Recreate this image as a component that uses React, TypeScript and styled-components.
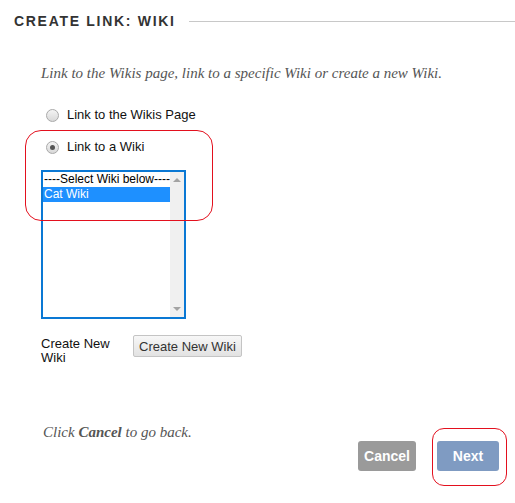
import React from "react";
import styled, { createGlobalStyle } from "styled-components";

const Global = createGlobalStyle`
  html, body { margin: 0; padding: 0; background: #fff; }
  body { font-family: "Liberation Sans", Arial, sans-serif; }
  * { box-sizing: border-box; }
`;

const Page = styled.div`
  position: relative;
  width: 515px;
  height: 503px;
  overflow: hidden;
`;

const Header = styled.div`
  display: flex;
  align-items: center;
  padding: 13px 0 0 14px;
`;

const Title = styled.h1`
  margin: 0;
  font-size: 14px;
  line-height: 16px;
  font-weight: bold;
  letter-spacing: 1.7px;
  color: #333;
  white-space: nowrap;
`;

const Rule = styled.div`
  flex: 1;
  height: 1px;
  background: #c8c8c8;
  margin-left: 13px;
`;

const Body = styled.div`
  padding-left: 41px;
`;

const Serif = styled.p`
  margin: 0;
  font-family: "Liberation Serif", "Times New Roman", serif;
  font-style: italic;
  font-size: 15px;
  line-height: 17px;
  color: #555;
`;

const Intro = styled(Serif)`
  margin-top: 36px;
`;

const RadioList = styled.div`
  display: flex;
  flex-direction: column;
  gap: 16px;
  margin-top: 25px;
  padding-left: 5px;
`;

const RadioRow = styled.label`
  display: flex;
  align-items: center;
  gap: 8px;
  font-size: 13px;
  line-height: 16px;
  color: #111;
`;

const RadioDot = styled.span<{ $checked?: boolean }>`
  position: relative;
  width: 13px;
  height: 13px;
  border-radius: 50%;
  border: 1px solid #a9a9a9;
  background: linear-gradient(#f4f4f4, #d8d8d8);
  &::after {
    content: "";
    display: ${(p) => (p.$checked ? "block" : "none")};
    position: absolute;
    left: 3px;
    top: 3px;
    width: 5px;
    height: 5px;
    border-radius: 50%;
    background: #555;
  }
`;

const ListBox = styled.div`
  display: flex;
  width: 145px;
  height: 149px;
  margin-top: 15px;
  border: 2px solid #0a78d4;
  background: #fff;
`;

const Options = styled.div`
  flex: 1;
  display: flex;
  flex-direction: column;
`;

const Option = styled.div<{ $selected?: boolean }>`
  height: 15px;
  line-height: 14px;
  font-size: 12px;
  padding-left: 1px;
  white-space: nowrap;
  overflow: hidden;
  color: ${(p) => (p.$selected ? "#fff" : "#000")};
  background: ${(p) => (p.$selected ? "#1e90ff" : "transparent")};
`;

const ScrollBar = styled.div`
  width: 15px;
  background: #f0f0f0;
  display: flex;
  flex-direction: column;
  justify-content: space-between;
  align-items: center;
  padding: 6px 0;
`;

const Arrow = styled.span<{ $down?: boolean }>`
  width: 0;
  height: 0;
  border-left: 4px solid transparent;
  border-right: 4px solid transparent;
  ${(p) =>
    p.$down ? "border-top: 4px solid #a3a3a3;" : "border-bottom: 4px solid #a3a3a3;"}
`;

const CreateRow = styled.div`
  display: flex;
  align-items: flex-start;
  margin-top: 18px;
`;

const CreateLabel = styled.div`
  width: 92px;
  padding-right: 12px;
  font-size: 13px;
  line-height: 14px;
  color: #111;
`;

const GrayButton = styled.button`
  height: 22px;
  padding: 0 5px;
  margin-top: -2px;
  font-family: "Liberation Sans", Arial, sans-serif;
  font-size: 13px;
  color: #333;
  border: 1px solid #c4c4c4;
  border-radius: 2px;
  background: linear-gradient(#f7f7f7, #e2e2e2);
`;

const Footer = styled.div`
  display: flex;
  justify-content: space-between;
  align-items: flex-start;
  margin-top: 59px;
  padding: 0 16px 0 43px;
`;

const Actions = styled.div`
  display: flex;
  gap: 21px;
  margin-top: 17px;
`;

const ActionButton = styled.button<{ $primary?: boolean }>`
  height: 30px;
  width: ${(p) => (p.$primary ? "62px" : "58px")};
  border: none;
  border-radius: 3px;
  font-family: "Liberation Sans", Arial, sans-serif;
  font-weight: bold;
  font-size: 14px;
  color: #fff;
  background: ${(p) => (p.$primary ? "#7f9bc2" : "#9a9a9a")};
`;

const Annotation = styled.div<{ $r: number }>`
  position: absolute;
  border: 1px solid #e3101e;
  border-radius: ${(p) => p.$r}px;
  pointer-events: none;
`;

export default function App() {
  return (
    <Page>
      <Global />
      <Header>
        <Title>CREATE LINK: WIKI</Title>
        <Rule />
      </Header>
      <Body>
        <Intro>Link to the Wikis page, link to a specific Wiki or create a new Wiki.</Intro>
        <RadioList>
          <RadioRow>
            <RadioDot />
            Link to the Wikis Page
          </RadioRow>
          <RadioRow>
            <RadioDot $checked />
            Link to a Wiki
          </RadioRow>
        </RadioList>
        <ListBox>
          <Options>
            <Option>----Select Wiki below----</Option>
            <Option $selected>Cat Wiki</Option>
          </Options>
          <ScrollBar>
            <Arrow />
            <Arrow $down />
          </ScrollBar>
        </ListBox>
        <CreateRow>
          <CreateLabel>Create New Wiki</CreateLabel>
          <GrayButton>Create New Wiki</GrayButton>
        </CreateRow>
      </Body>
      <Footer>
        <Serif>
          Click <b>Cancel</b> to go back.
        </Serif>
        <Actions>
          <ActionButton>Cancel</ActionButton>
          <ActionButton $primary>Next</ActionButton>
        </Actions>
      </Footer>
      <Annotation $r={16} style={{ left: 25, top: 130, width: 188, height: 91 }} />
      <Annotation $r={12} style={{ left: 432, top: 428, width: 75, height: 58 }} />
    </Page>
  );
}
